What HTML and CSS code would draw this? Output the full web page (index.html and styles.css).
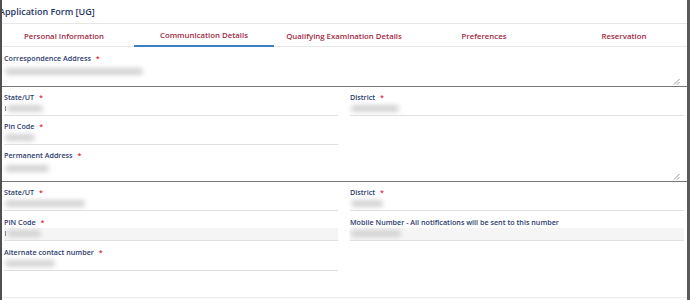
FILE: index.html
```html
<!DOCTYPE html>
<html lang="en">
<head>
<meta charset="utf-8">
<title>Application Form [UG]</title>
<link rel="stylesheet" href="styles.css">
</head>
<body>
<div class="frame">
  <div class="card">
    <header class="title">Application Form [UG]</header>
    <nav class="tabs">
      <div class="tab">Personal Information</div>
      <div class="tab active">Communication Details</div>
      <div class="tab">Qualifying Examination Details</div>
      <div class="tab">Preferences</div>
      <div class="tab">Reservation</div>
    </nav>
    <form class="form">
      <div class="field wide">
        <label class="label">Correspondence Address <span class="req">*</span></label>
        <div class="textarea t1">
          <span class="blob" style="width:138px"></span>
          <svg class="grip" width="7" height="7" viewBox="0 0 7 7"><path d="M1 6.5L6.5 1M4 6.5L6.5 4" stroke="#8a8a8a" stroke-width="0.9" fill="none"/></svg>
        </div>
      </div>
      <div class="field">
        <label class="label">State/UT <span class="req">*</span></label>
        <div class="input"><span class="tick"></span><span class="blob" style="width:36px"></span></div>
      </div>
      <div class="field">
        <label class="label">District <span class="req">*</span></label>
        <div class="input"><span class="blob" style="width:48px"></span></div>
      </div>
      <div class="field">
        <label class="label">Pin Code <span class="req">*</span></label>
        <div class="input"><span class="blob" style="width:30px"></span></div>
      </div>
      <div class="field empty"></div>
      <div class="field wide">
        <label class="label">Permanent Address <span class="req">*</span></label>
        <div class="textarea t2">
          <span class="blob" style="width:44px"></span>
          <svg class="grip" width="7" height="7" viewBox="0 0 7 7"><path d="M1 6.5L6.5 1M4 6.5L6.5 4" stroke="#8a8a8a" stroke-width="0.9" fill="none"/></svg>
        </div>
      </div>
      <div class="field low">
        <label class="label">State/UT <span class="req">*</span></label>
        <div class="input"><span class="blob" style="width:80px"></span></div>
      </div>
      <div class="field low">
        <label class="label">District <span class="req">*</span></label>
        <div class="input"><span class="blob" style="width:32px"></span></div>
      </div>
      <div class="field low">
        <label class="label">PIN Code <span class="req">*</span></label>
        <div class="input disabled"><span class="tick"></span><span class="blob" style="width:34px"></span></div>
      </div>
      <div class="field low">
        <label class="label">Mobile Number - All notifications will be sent to this number</label>
        <div class="input disabled"><span class="blob" style="width:50px"></span></div>
      </div>
      <div class="field low">
        <label class="label">Alternate contact number <span class="req">*</span></label>
        <div class="input"><span class="blob" style="width:50px"></span></div>
      </div>
    </form>
  </div>
</div>
</body>
</html>
```
FILE: styles.css
```css
html, body {
  margin: 0;
  padding: 0;
  background: #ffffff;
}
body {
  font-family: "Open Sans", "Noto Sans", sans-serif;
  overflow: hidden;
}
.frame {
  width: 690px;
  height: 300px;
  box-sizing: border-box;
  border-left: 2px solid #4f4f4f;
  border-right: 3px solid #5a5a5a;
  overflow: hidden;
  display: flex;
}
.card {
  flex: 0 0 700px;
  width: 700px;
  margin-left: -8px;
  display: flex;
  flex-direction: column;
}
.title {
  height: 23px;
  line-height: 23px;
  padding-left: 5px;
  font-size: 9px;
  font-weight: 600;
  color: #27355f;
  border-bottom: 1px solid #e6e6e6;
}
.tabs {
  display: grid;
  grid-template-columns: repeat(5, 140px);
}
.tab {
  height: 23px;
  box-sizing: border-box;
  border-bottom: 1px solid #e8e8e8;
  display: flex;
  align-items: center;
  justify-content: center;
  font-size: 7.8px;
  font-weight: 600;
  color: #a52843;
  padding-top: 1px;
}
.tab.active {
  border-bottom: 2px solid #3d7fc2;
}
.form {
  box-sizing: border-box;
  height: 251px;
  padding: 6px 9px 0 10px;
  display: grid;
  grid-template-columns: 1fr 1fr;
  column-gap: 11px;
  align-content: start;
  border-bottom: 1px solid #ebebeb;
}
.field {
  margin-bottom: 5px;
  min-width: 0;
}
.field.low {
  margin-bottom: 6px;
}
.field.wide {
  grid-column: 1 / -1;
}
.field.empty {
  margin: 0;
}
.label {
  display: block;
  height: 11px;
  line-height: 11px;
  font-size: 7.2px;
  font-weight: 600;
  color: #2c3b6c;
  white-space: nowrap;
}
.req {
  color: #e0283c;
  margin-left: 3px;
}
.input {
  height: 13px;
  box-sizing: border-box;
  border-bottom: 1px solid #e0e0e0;
  margin-right: 1px;
  display: flex;
  align-items: flex-start;
  padding-top: 2px;
  padding-left: 1px;
}
.input.disabled {
  background: #f5f5f5;
}
.textarea {
  margin-left: -10px;
  margin-right: -9px;
  padding: 4px 14px 1px 11px;
  box-sizing: border-box;
  border-bottom: 1px solid #767676;
  display: flex;
  justify-content: space-between;
  align-items: flex-start;
}
.textarea.t1 {
  height: 23px;
}
.textarea.t2 {
  height: 21px;
}
.grip {
  align-self: flex-end;
}
.blob {
  display: block;
  height: 7px;
  background: #d3d3d3;
  border-radius: 4px;
  filter: blur(2.5px);
}
.tick {
  display: block;
  width: 1px;
  height: 5px;
  margin-top: 1px;
  margin-right: 1px;
  background: #777;
}
```
